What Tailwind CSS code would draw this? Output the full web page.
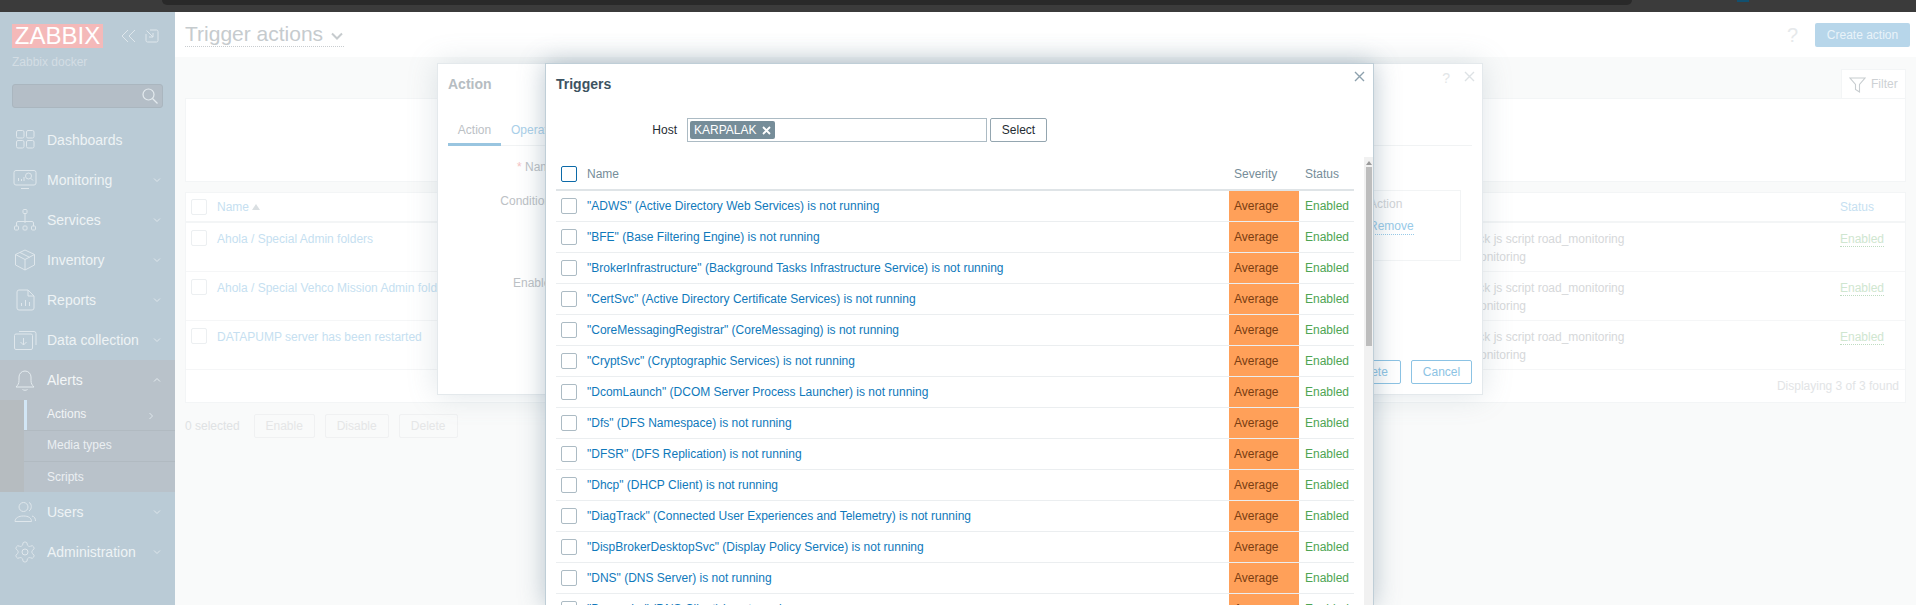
<!DOCTYPE html>
<html lang="en">
<head>
  <meta charset="UTF-8" />
  <title>Trigger actions</title>
  <script src="https://cdn.jsdelivr.net/npm/@tailwindcss/browser@4"></script>
</head>
<body class="relative w-[1916px] h-[605px] overflow-hidden bg-[#f9fafa] font-['Liberation_Sans',sans-serif] text-xs">

  <!-- browser strip -->
  <div class="relative h-3 bg-[#3b3b3b]">
    <div class="absolute left-[162px] top-0 w-[1470px] h-[5px] bg-[#292929] rounded-b-lg"></div>
    <div class="absolute left-[1737px] top-0 w-3 h-[2px] bg-[#12506f]"></div>
  </div>

  <div class="flex h-[593px]">
    <!-- sidebar -->
    <aside class="w-[175px] shrink-0 bg-[#bacbd6] text-[#eef3f5] text-sm">
      <div class="flex items-center pl-3 pt-3">
        <span class="w-[91px] h-6 bg-[#f4b9b9] text-white text-2xl leading-6 text-center">ZABBIX</span>
        <svg class="ml-[17px] w-4 h-4" viewBox="0 0 16 16" fill="none" stroke="#dfe7ec" stroke-width="1"><path d="M8 2 2 8l6 6M15 2 9 8l6 6"/></svg>
        <svg class="ml-[9px] w-[14px] h-[14px]" viewBox="0 0 14 14" fill="none" stroke="#dfe7ec" stroke-width="1"><path d="M5 1h6.500a1.500 1.500 0 0 1 1.500 1.500v9a1.500 1.500 0 0 1-1.500 1.500h-9A1.500 1.500 0 0 1 1 11.500V5M1.500 1.500 8 8M8 4v4H4"/></svg>
      </div>
      <div class="mt-[6px] pl-3 text-xs leading-4 text-[#d3dde4]">Zabbix docker</div>
      <div class="relative mt-[14px] ml-3 w-[151px] h-6 bg-[#b4bec7] border border-[#aab6bf] rounded-[3px]">
        <svg class="absolute right-1 top-[3px] w-4 h-4" viewBox="0 0 16 16" fill="none" stroke="#e4ebef" stroke-width="1.200"><circle cx="6.500" cy="6.500" r="5.500"/><path d="m10.500 10.500 5 5"/></svg>
      </div>

      <nav class="mt-3">
        <a class="flex items-center h-10">
          <svg class="ml-[13px] w-6 h-6" viewBox="0 0 24 24" fill="none" stroke="#dfe7ec"><rect x="3.500" y="2.500" width="7.500" height="7.500" rx="1.500"/><rect x="13.500" y="2.500" width="7.500" height="7.500" rx="1.500"/><rect x="3.500" y="12.500" width="7.500" height="7.500" rx="1.500"/><rect x="13.500" y="12.500" width="7.500" height="7.500" rx="1.500"/></svg>
          <span class="ml-[10px]">Dashboards</span>
        </a>
        <a class="flex items-center h-10">
          <svg class="ml-[13px] w-6 h-6" viewBox="0 0 24 24" fill="none" stroke="#dfe7ec"><path d="M3 2.500h18a2 2 0 0 1 2 2V15a2 2 0 0 1-2 2H3a2 2 0 0 1-2-2V4.500a2 2 0 0 1 2-2ZM8 20.500h8"/><path d="M5.500 10v3M8.500 11v2M11 9v4"/><circle cx="15.500" cy="8" r="3"/><path d="m17.700 10.200 2.300 2.300"/></svg>
          <span class="ml-[10px]">Monitoring</span>
          <svg class="ml-auto mr-[14px] w-2 h-2" viewBox="0 0 8 8" fill="none" stroke="#dfe7ec"><path d="m1 2.500 3 3 3-3"/></svg>
        </a>
        <a class="flex items-center h-10">
          <svg class="ml-[13px] w-6 h-6" viewBox="0 0 24 24" fill="none" stroke="#dfe7ec"><rect x="10" y="1.500" width="4" height="4" rx="1"/><path d="M12 5.500V15M3.500 18v-3a1.500 1.500 0 0 1 1.500-1.500h14a1.500 1.500 0 0 1 1.500 1.500v3"/><rect x="1.500" y="18" width="4" height="4" rx="1"/><rect x="10" y="18" width="4" height="4" rx="1"/><rect x="18.500" y="18" width="4" height="4" rx="1"/></svg>
          <span class="ml-[10px]">Services</span>
          <svg class="ml-auto mr-[14px] w-2 h-2" viewBox="0 0 8 8" fill="none" stroke="#dfe7ec"><path d="m1 2.500 3 3 3-3"/></svg>
        </a>
        <a class="flex items-center h-10">
          <svg class="ml-[13px] w-6 h-6" viewBox="0 0 24 24" fill="none" stroke="#dfe7ec"><path d="M12 2 21.500 6.500V17L12 22 2.500 17V6.500ZM2.500 6.500 12 11.500l9.500-5M12 11.500V22M7 4.500l9.500 4.800"/></svg>
          <span class="ml-[10px]">Inventory</span>
          <svg class="ml-auto mr-[14px] w-2 h-2" viewBox="0 0 8 8" fill="none" stroke="#dfe7ec"><path d="m1 2.500 3 3 3-3"/></svg>
        </a>
        <a class="flex items-center h-10">
          <svg class="ml-[13px] w-6 h-6" viewBox="0 0 24 24" fill="none" stroke="#dfe7ec"><path d="M6 2h9l6 6v12a2 2 0 0 1-2 2H6a2 2 0 0 1-2-2V4a2 2 0 0 1 2-2ZM15 2v6h6M8.500 18v-3M12.500 18v-6M16.500 18v-4"/></svg>
          <span class="ml-[10px]">Reports</span>
          <svg class="ml-auto mr-[14px] w-2 h-2" viewBox="0 0 8 8" fill="none" stroke="#dfe7ec"><path d="m1 2.500 3 3 3-3"/></svg>
        </a>
        <a class="flex items-center h-10">
          <svg class="ml-[13px] w-6 h-6" viewBox="0 0 24 24" fill="none" stroke="#dfe7ec"><path d="M3 6h15a1.500 1.500 0 0 1 1.500 1.500V20a1.500 1.500 0 0 1-1.500 1.500H3A1.500 1.500 0 0 1 1.500 20V7.500A1.500 1.500 0 0 1 3 6ZM6 3.500h15a2 2 0 0 1 2 2V17M10.500 10v7M7.500 14l3 3 3-3"/></svg>
          <span class="ml-[10px]">Data collection</span>
          <svg class="ml-auto mr-[14px] w-2 h-2" viewBox="0 0 8 8" fill="none" stroke="#dfe7ec"><path d="m1 2.500 3 3 3-3"/></svg>
        </a>
        <a class="flex items-center h-10 bg-[#b9c2ca] text-[#f3f6f7]">
          <svg class="ml-[13px] w-6 h-6" viewBox="0 0 24 24" fill="none" stroke="#e4ebef"><path d="M3 19c2-2 3-3.500 3-6.500V9a6 6 0 0 1 12 0v3.500c0 3 1 4.500 3 6.500ZM9.500 21.500c1.500 1 3.500 1 5 0"/></svg>
          <span class="ml-[10px]">Alerts</span>
          <svg class="ml-auto mr-[14px] w-2 h-2" viewBox="0 0 8 8" fill="none" stroke="#e4ebef"><path d="m1 5.500 3-3 3 3"/></svg>
        </a>
        <div class="bg-[#b6bcc0] pl-6 text-xs">
          <a class="flex items-center h-[31px] pb-[3px] pl-[23px] bg-[#b9c2ca] border-b border-[#b1bac1] relative text-[#f1f4f6]">
            <span class="absolute left-0 top-0 w-[3px] h-[30px] bg-[#d2e6f5]"></span>
            Actions
            <svg class="ml-auto mr-5 mt-1 w-2 h-2" viewBox="0 0 8 8" fill="none" stroke="#dfe7ec"><path d="m2.500 1 3 3-3 3"/></svg>
          </a>
          <a class="flex items-center h-[31px] pb-[2px] pl-[23px] bg-[#b9c2ca] border-b border-[#b1bac1] text-[#ebeff2]">Media types</a>
          <a class="flex items-center h-[30px] pb-[1px] pl-[23px] bg-[#b9c2ca] text-[#ebeff2]">Scripts</a>
        </div>
        <a class="flex items-center h-10">
          <svg class="ml-[13px] w-6 h-6" viewBox="0 0 24 24" fill="none" stroke="#dfe7ec"><circle cx="10.500" cy="7" r="4.500"/><path d="M16 2.500c3 1 3 7 0 8.500M2 21.500c0-3.500 3.500-5.500 8.500-5.500s8 2 8 5.500ZM19 16c2.500.5 3.500 2.500 3.500 5"/></svg>
          <span class="ml-[10px]">Users</span>
          <svg class="ml-auto mr-[14px] w-2 h-2" viewBox="0 0 8 8" fill="none" stroke="#dfe7ec"><path d="m1 2.500 3 3 3-3"/></svg>
        </a>
        <a class="flex items-center h-10">
          <svg class="ml-[13px] w-6 h-6" viewBox="0 0 24 24" fill="none" stroke="#dfe7ec"><path d="M12.220 2h-.44a2 2 0 0 0-2 2v.18a2 2 0 0 1-1 1.730l-.43.25a2 2 0 0 1-2 0l-.15-.08a2 2 0 0 0-2.730.73l-.22.38a2 2 0 0 0 .73 2.730l.15.1a2 2 0 0 1 1 1.720v.51a2 2 0 0 1-1 1.740l-.15.09a2 2 0 0 0-.73 2.730l.22.38a2 2 0 0 0 2.730.73l.15-.08a2 2 0 0 1 2 0l.43.25a2 2 0 0 1 1 1.730V20a2 2 0 0 0 2 2h.44a2 2 0 0 0 2-2v-.18a2 2 0 0 1 1-1.730l.43-.25a2 2 0 0 1 2 0l.15.08a2 2 0 0 0 2.730-.73l.22-.39a2 2 0 0 0-.73-2.730l-.15-.08a2 2 0 0 1-1-1.740v-.5a2 2 0 0 1 1-1.740l.15-.09a2 2 0 0 0 .73-2.730l-.22-.38a2 2 0 0 0-2.730-.73l-.15.08a2 2 0 0 1-2 0l-.43-.25a2 2 0 0 1-1-1.730V4a2 2 0 0 0-2-2z"/><circle cx="12" cy="12" r="3"/></svg>
          <span class="ml-[10px]">Administration</span>
          <svg class="ml-auto mr-[14px] w-2 h-2" viewBox="0 0 8 8" fill="none" stroke="#dfe7ec"><path d="m1 2.500 3 3 3-3"/></svg>
        </a>
      </nav>
    </aside>

    <!-- page -->
    <main class="flex-1 min-w-0">
      <header class="flex items-center h-[45px] bg-white pl-[10px] pr-[6px]">
        <h1 class="flex items-center h-[25px] border-b border-dotted border-[#c9cdd0] w-[159px] whitespace-nowrap text-[21px] leading-6 font-normal text-[#c6cbce]">
          Trigger actions
          <svg class="ml-2 mt-[4px] w-3 h-3" viewBox="0 0 12 12" fill="none" stroke="#c6cbce" stroke-width="2"><path d="m1 3.500 5 5 5-5"/></svg>
        </h1>
        <span class="ml-auto mr-[17px] text-xl text-[#e6e9eb]">?</span>
        <button class="w-[95px] h-6 bg-[#b7d6ea] rounded-[2px] text-xs text-[#e9f3f9]">Create action</button>
      </header>

      <div class="pt-3 px-[10px]">
        <div class="flex justify-end">
          <div class="flex items-center w-[65px] h-[29px] pl-[7px] bg-white border-t border-x border-[#f3f5f6] text-[#cdd1d4]">
            <svg class="w-[17px] h-[17px]" viewBox="0 0 17 17" fill="none" stroke="#c8cdd0" stroke-width="1.100"><path d="M1 2h15l-5.500 6.500V16L6.500 13.500v-5Z"/></svg>
            <span class="ml-[5px]">Filter</span>
          </div>
        </div>
        <div class="h-[84px] bg-white border border-[#f3f5f6]"></div>

        <div class="mt-[10px] bg-white border border-[#f3f5f6]">
          <div class="grid grid-cols-[31px_1244px_378px_1fr] items-center h-[30px] border-b-2 border-[#f3f5f6] text-[#c6dff1]">
            <span class="ml-[5px] w-4 h-4 border border-[#eceff1] rounded-[2px]"></span>
            <span class="flex items-center">Name<svg class="ml-[3px] w-2 h-2" viewBox="0 0 8 8" fill="#dadfe2"><path d="M0 7 4 1l4 6Z"/></svg></span>
            <span></span>
            <span class="ml-[1px]">Status</span>
          </div>

          <div class="grid grid-cols-[31px_1244px_378px_1fr] h-[49px] border-b border-[#f5f6f7] pt-[7px] leading-[18px]">
            <span class="ml-[5px] w-4 h-4 border border-[#eceff1] rounded-[2px]"></span>
            <span class="text-[#c6dff1]">Ahola / Special Admin folders</span>
            <span class="text-[#d6d8da] whitespace-nowrap">Slack js script road_monitoring<span class="block pl-[9px]">monitoring</span></span>
            <span class="ml-[1px]"><span class="text-[#cfe6d0] border-b border-dotted border-[#bfdcc1]">Enabled</span></span>
          </div>
          <div class="grid grid-cols-[31px_1244px_378px_1fr] h-[49px] border-b border-[#f5f6f7] pt-[7px] leading-[18px]">
            <span class="ml-[5px] w-4 h-4 border border-[#eceff1] rounded-[2px]"></span>
            <span class="text-[#c6dff1]">Ahola / Special Vehco Mission Admin folders</span>
            <span class="text-[#d6d8da] whitespace-nowrap">Slack js script road_monitoring<span class="block pl-[9px]">monitoring</span></span>
            <span class="ml-[1px]"><span class="text-[#cfe6d0] border-b border-dotted border-[#bfdcc1]">Enabled</span></span>
          </div>
          <div class="grid grid-cols-[31px_1244px_378px_1fr] h-[49px] border-b border-[#f5f6f7] pt-[7px] leading-[18px]">
            <span class="ml-[5px] w-4 h-4 border border-[#eceff1] rounded-[2px]"></span>
            <span class="text-[#c6dff1]">DATAPUMP server has been restarted</span>
            <span class="text-[#d6d8da] whitespace-nowrap">Slack js script road_monitoring<span class="block pl-[9px]">monitoring</span></span>
            <span class="ml-[1px]"><span class="text-[#cfe6d0] border-b border-dotted border-[#bfdcc1]">Enabled</span></span>
          </div>
          <div class="flex items-center justify-end h-[32px] pr-[6px] text-[#e2e4e6]">Displaying 3 of 3 found</div>
        </div>

        <div class="flex items-center mt-[11px] text-[#dfe2e4]">
          <span>0 selected</span>
          <button class="ml-[14px] w-[61px] h-6 border border-[#f0f1f2] rounded-[2px] text-[#e5e6e7]">Enable</button>
          <button class="ml-[10px] w-[64px] h-6 border border-[#f0f1f2] rounded-[2px] text-[#e5e6e7]">Disable</button>
          <button class="ml-[10px] w-[59px] h-6 border border-[#f0f1f2] rounded-[2px] text-[#e5e6e7]">Delete</button>
        </div>
      </div>
    </main>
  </div>

  <!-- Action dialog -->
  <section class="absolute left-[437px] top-[63px] w-[1046px] h-[332px] flex flex-col bg-white border border-[#e4e9ec] shadow-[0_0_28px_rgba(110,135,150,0.22)] px-[10px] text-[#bcc1c5]">
    <svg class="absolute right-[7px] top-[7px] w-[11px] h-[11px]" viewBox="0 0 11 11" fill="none" stroke="#dde2e5" stroke-width="1.400"><path d="m1 1 9 9M10 1l-9 9"/></svg>
    <span class="absolute right-[32px] top-[4px] text-sm text-[#e3e6e8]">?</span>
    <h2 class="h-[54px] pt-3 text-sm leading-4 font-bold text-[#b6bdc2]">Action</h2>
    <div class="flex h-[28px] border-b border-[#f1f3f4]">
      <span class="w-[53px] h-[28px] pt-1 border-b-[3px] border-[#99c5e0] text-center">Action</span>
      <span class="ml-[10px] pt-1 text-[#a9cfe9]">Operations</span>
    </div>
    <div class="flex mt-[9px] h-6 items-center">
      <label class="w-[109px] text-right"><span class="text-[#f6c3c3]">*</span> Name</label>
    </div>
    <div class="flex mt-[11px] h-[71px]">
      <label class="w-[109px] pt-[3px] text-right">Conditions</label>
      <div class="ml-[13px] flex-1 mr-[11px] pt-[5px] pr-[46px] border border-[#f2f4f5] flex flex-col items-end">
        <div class="w-[45px]">
          <div class="leading-4 text-[#d0d3d6]">Action</div>
          <div class="mt-[6px] leading-4 text-[#98cae8] border-b border-dotted border-[#98cae8]">Remove</div>
        </div>
      </div>
    </div>
    <div class="flex mt-[10px] h-6 items-center">
      <label class="w-[109px] text-right">Enabled</label>
    </div>
    <div class="flex justify-end mt-auto mb-[10px]">
      <button class="w-[61px] h-6 border border-[#8cc3e4] rounded-[2px] text-[#8cc3e4]">Delete</button>
      <button class="ml-[10px] w-[61px] h-6 border border-[#8cc3e4] rounded-[2px] text-[#8cc3e4]">Cancel</button>
    </div>
  </section>

  <!-- Triggers dialog -->
  <section class="absolute left-[545px] top-[63px] w-[829px] h-[543px] overflow-hidden bg-white border border-[#bfced7] shadow-[0_0_24px_rgba(90,120,140,0.42)] text-[#1f2c33]">
    <svg class="absolute right-[8px] top-[7px] w-[11px] h-[11px]" viewBox="0 0 11 11" fill="none" stroke="#8da1ad" stroke-width="1.400"><path d="m1 1 9 9M10 1l-9 9"/></svg>
    <h2 class="h-[54px] pl-[10px] pt-3 text-sm leading-4 font-bold text-[#3d5361]">Triggers</h2>
    <div class="flex items-center h-6">
      <label class="w-[131px] text-right">Host</label>
      <div class="flex items-center ml-[10px] w-[300px] h-6 pl-[2px] border border-[#acbbc4]">
        <span class="flex items-center h-[18px] px-1 bg-[#768d99] rounded-[2px] text-white">KARPALAK
          <svg class="ml-[6px] w-[9px] h-[9px]" viewBox="0 0 9 9" fill="none" stroke="#ffffff" stroke-width="1.800"><path d="m1 1 7 7M8 1 1 8"/></svg>
        </span>
      </div>
      <button class="ml-[3px] w-[57px] h-6 border border-[#94a6b0] rounded-[2px]">Select</button>
    </div>

    <div class="flex mt-[15px]">
      <div class="ml-[10px] w-[798px]">
        <div class="flex items-center h-[34px] pt-[2px] border-b-2 border-[#dfe4e7] text-[#768d99]">
          <span class="ml-[5px] w-4 h-4 border-[1.500px] border-[#0c6aa8] rounded-[2px]"></span>
          <span class="ml-[10px] flex-1">Name</span>
          <span class="w-[70px] pl-[5px]">Severity</span>
          <span class="w-[55px] pl-[6px]">Status</span>
        </div>
        <div id="triggerRows"></div>
      </div>
      <div class="relative ml-[10px] w-[9px] h-[540px] bg-[#f1f1f1] pl-[2px]">
        <svg class="absolute left-[2px] top-[4px] w-[6px] h-1" viewBox="0 0 6 4" fill="#9a9a9a"><path d="M0 4 3 0l3 4Z"/></svg>
        <div class="absolute left-[2px] top-[10px] w-[6px] h-[179px] bg-[#bdbdbd]"></div>
      </div>
    </div>
  </section>

  <script>
    const TRIGGERS = [
      '"ADWS" (Active Directory Web Services) is not running',
      '"BFE" (Base Filtering Engine) is not running',
      '"BrokerInfrastructure" (Background Tasks Infrastructure Service) is not running',
      '"CertSvc" (Active Directory Certificate Services) is not running',
      '"CoreMessagingRegistrar" (CoreMessaging) is not running',
      '"CryptSvc" (Cryptographic Services) is not running',
      '"DcomLaunch" (DCOM Server Process Launcher) is not running',
      '"Dfs" (DFS Namespace) is not running',
      '"DFSR" (DFS Replication) is not running',
      '"Dhcp" (DHCP Client) is not running',
      '"DiagTrack" (Connected User Experiences and Telemetry) is not running',
      '"DispBrokerDesktopSvc" (Display Policy Service) is not running',
      '"DNS" (DNS Server) is not running',
      '"Dnscache" (DNS Client) is not running'
    ];

    document.getElementById("triggerRows").innerHTML = TRIGGERS.map(name => `
      <div class="flex items-center h-[31px] border-b border-[#ebeef0]">
        <span class="ml-[5px] w-4 h-4 border border-[#acbbc4] rounded-[2px]"></span>
        <a class="ml-[10px] flex-1 text-[#0f79bb]">${name}</a>
        <span class="flex items-center w-[70px] h-[30px] pl-[5px] bg-[#ffa059] text-[#7a3d12]">Average</span>
        <span class="w-[55px] pl-[6px] text-[#4ea553]">Enabled</span>
      </div>
    `).join("");
  </script>
</body>
</html>
